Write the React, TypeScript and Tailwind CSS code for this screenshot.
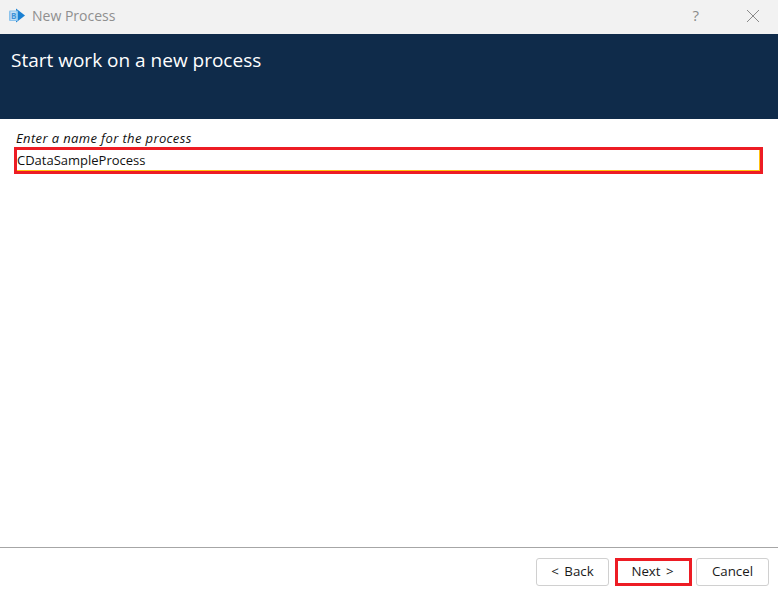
export default function App() {
  const font = { fontFamily: '"Open Sans", "Noto Sans", sans-serif' };
  return (
    <div className="flex h-[591px] w-[778px] flex-col overflow-hidden bg-white" style={font}>
      {/* Title bar */}
      <div className="flex h-[34px] shrink-0 items-center bg-[#f2f2f2] pb-[3px] pl-[8px]">
        <svg width="18" height="16" viewBox="0 0 18 16" className="shrink-0">
          <path d="M8 0.500L17 7.500 8 14.500z" fill="#1a80d2" />
          <rect x="1" y="2.500" width="9" height="10.500" rx="1" fill="#8cc3ec" />
          <rect x="2.500" y="3.500" width="6" height="8.500" fill="#c4e0f5" />
          <text x="3" y="10.500" fontSize="8" fontWeight="700" fill="#3f93d8" fontFamily="Open Sans, sans-serif">B</text>
        </svg>
        <span className="ml-[6px] text-[14px] text-[#8f8f8f]">New Process</span>
        <span className="ml-auto mr-[47px] text-[15px] text-[#8a8a8a]">?</span>
        <svg width="14" height="14" viewBox="0 0 14 14" className="mr-[18px] shrink-0" stroke="#8a8a8a" strokeWidth="1">
          <line x1="1" y1="1" x2="13" y2="13" />
          <line x1="13" y1="1" x2="1" y2="13" />
        </svg>
      </div>

      {/* Banner */}
      <div className="h-[85px] shrink-0 bg-[#0f2b4a] pl-[11px] pt-[13px]">
        <h1 className="text-[19px] leading-[27px] font-normal text-white">Start work on a new process</h1>
      </div>

      {/* Form */}
      <div className="flex flex-1 flex-col px-[14px] pt-[10px]">
        <label className="pl-[2px] text-[13px] leading-[18px] tracking-[0.37px] text-[#111] italic">Enter a name for the process</label>
        <div className="h-[27px] w-[749px] border-[3px] border-[#ed1c24]">
          <div className="flex h-full items-center border-r border-b border-[#ffc20e] pt-[1px] text-[13px] text-[#111]">
            CDataSampleProcess
          </div>
        </div>
      </div>

      {/* Footer */}
      <div className="flex h-[44px] shrink-0 items-start justify-end border-t border-[#a6a6a6] pt-[10px] pr-[9px] text-[13.300px] text-[#1a1a1a]">
        <button type="button" className="h-[28px] w-[73px] rounded-[3px] border border-[#d0d0d0] bg-white [word-spacing:2px]">&lt; Back</button>
        <button type="button" className="ml-[6px] h-[28px] w-[77px] border-[3px] border-[#ed1c24] bg-white pr-[2px] [word-spacing:2px]">Next &gt;</button>
        <button type="button" className="ml-[4px] h-[28px] w-[73px] rounded-[3px] border border-[#d0d0d0] bg-white">Cancel</button>
      </div>
    </div>
  );
}
